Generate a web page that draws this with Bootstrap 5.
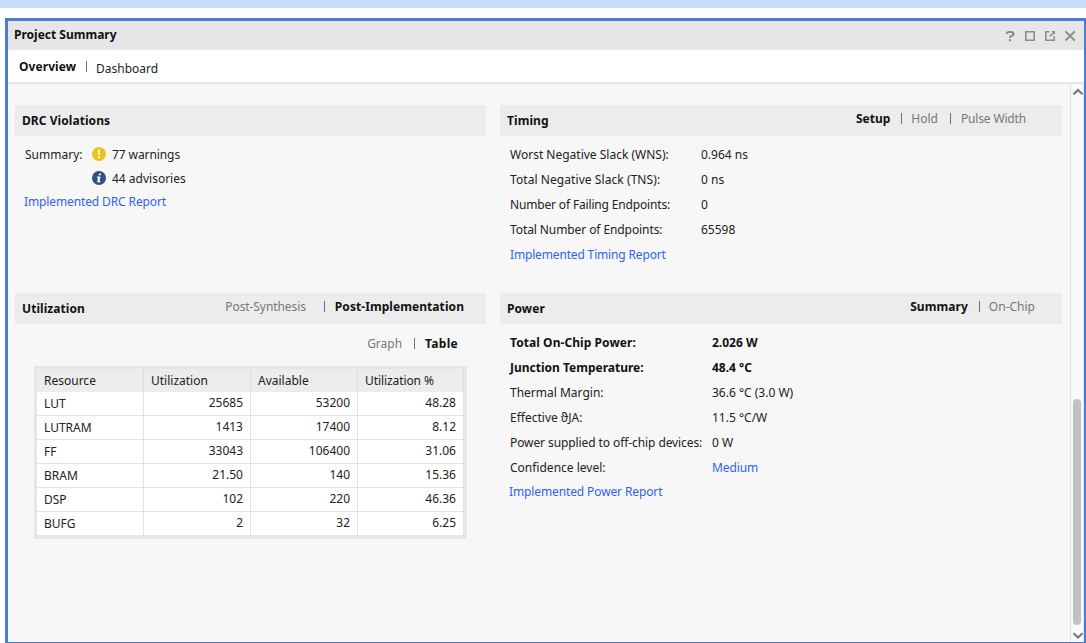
<!DOCTYPE html>
<html lang="en">
<head>
<meta charset="utf-8">
<title>Project Summary</title>
<link href="https://cdn.jsdelivr.net/npm/bootstrap@5.3.0/dist/css/bootstrap.min.css" rel="stylesheet">
<style>
html,body{height:100%}
body{font-family:"Noto Sans",sans-serif;font-size:12px;line-height:17px;color:#222;background:#fff;overflow:hidden}
b,.strong{font-weight:700;color:#111}
a{color:#2f62f0;text-decoration:none;letter-spacing:-.12px}
.topband{height:8px;background:#c9dcfd}
.win{margin:10px 0 0 5px;height:625px;border:3px solid #4a7ccf;border-right-width:2px;border-bottom-width:1px;background:#f7f7f7}
.titlebar{height:29px;background:#e6e6e6;padding:0 7px 0 6px}
.titlebar b{margin-bottom:2px}
.titlebar svg{margin-top:1px}
.views{height:34px;border-bottom:2px solid #e6e6e6;background:#fff;padding-left:11px}
.views b{width:67px;letter-spacing:.08px}
.views span{margin:4px 0 0 9px}
.bar{width:1px;height:11px;background:#6b7075;flex:none}
.content{padding:21px 8px 0 7px}
.leftcol{width:471px}
.rightcol{width:562px}
.toprow{height:188px}
.head{height:31px;background:#ececec;padding-left:7px}
.head>b{letter-spacing:.06px}
.choices{margin-bottom:4px;color:#777}
.facts{padding:6px 0 0 10px}
.facts>div{height:25px}
.facts .key{width:191px}
.power .key{width:202px}
.tight{letter-spacing:-.09px}
.tighter{letter-spacing:-.16px}
.wide{letter-spacing:.07px}
.ico{width:14px;height:14px;margin-right:6px}
.lines{height:24px}
.switch{height:42px;padding:0 28px 3px 0;color:#777}
.grid{width:433px;margin-left:19px;border:3px solid #e6e6e6;background:#fff;table-layout:fixed;border-collapse:separate;border-spacing:0}
.grid th,.grid td{padding:0 7px;border-right:1px solid #e2e2e2;font-weight:400;line-height:17px}
.grid th{height:23px;background:#ececec;border-right-color:#dcdcdc}
.grid td{height:24px;border-bottom:1px solid #e2e2e2;text-align:right;padding-bottom:2px}
.grid td:first-child{text-align:left;padding-bottom:0}
.grid tr:last-child td{border-bottom-color:#e6e6e6}
.scroller{width:14px;border-left:1px solid #e2e2e2;border-right:1px solid #e6e6e6;background:#fafafa;padding:3px 0 0}
.scroller svg{margin-left:1px}
.thumb{width:8px;height:226px;margin-top:303px;border-radius:4px;background:#c1c1c1}
</style>
</head>
<body>
<div class="topband"></div>
<main class="win d-flex flex-column">
  <header class="titlebar d-flex align-items-center justify-content-between">
    <b>Project Summary</b>
    <svg width="72" height="14" viewBox="0 0 72 14" fill="none" stroke="#8c8c8c" stroke-width="1.6">
      <path d="M1.8 5V4.6Q2 3 4 3H6.2Q8.4 3 8.4 4.8T6.4 7Q5 7.5 5 9M5 10.2v2.1" stroke-width="2.2"/>
      <path d="M20.8 2.8h8.4v8.4h-8.4z"/>
      <path d="M44.2 2.8h-3.4v8.4h8.4V7.3M45 7.2l3.5-3.5"/><path d="M46.3 2H50v3.7z" fill="#8c8c8c" stroke="none"/>
      <path d="M60.5 2.3l9.2 9.2M69.7 2.3l-9.2 9.2" stroke-width="1.9"/>
    </svg>
  </header>
  <nav class="views d-flex align-items-center"><b>Overview</b><i class="bar"></i><span>Dashboard</span></nav>
  <div class="d-flex flex-grow-1">
    <div class="content d-flex justify-content-between flex-grow-1">
      <div class="leftcol">
        <section class="toprow">
          <div class="head d-flex align-items-center"><b>DRC Violations</b></div>
          <div class="d-flex lines align-items-center" style="margin:6px 0 0 10px"><span style="width:67px">Summary:</span>
            <svg class="ico" viewBox="0 0 14 14"><circle cx="7" cy="7" r="7" fill="#eac51c"/><path d="M6 2.7h2L7.7 8H6.3zM6 9.2h2v2H6z" fill="#fff"/></svg><span class="tight">77 warnings</span></div>
          <div class="d-flex lines align-items-center" style="padding-left:77px">
            <svg class="ico" viewBox="0 0 14 14"><circle cx="7" cy="7" r="7" fill="#334f88"/><path d="M7.1 2.5h2l-.4 1.8h-2zM5.2 5.4h3.3l-1 4.5h1.1l-.3 1.4H5.1l.9-4.5H4.9z" fill="#fff"/></svg>44 advisories</div>
          <div class="d-flex align-items-center" style="height:22px;padding-left:9px"><a href="#">Implemented DRC Report</a></div>
        </section>
        <section>
          <div class="head d-flex align-items-center justify-content-between" style="padding-right:22px"><b>Utilization</b>
            <div class="choices d-flex align-items-center"><span class="tight">Post-Synthesis</span><i class="bar" style="margin:0 10px 0 18px"></i><b class="wide">Post-Implementation</b></div></div>
          <div class="switch d-flex align-items-center justify-content-end"><span>Graph</span><i class="bar" style="margin:0 10px 0 12px"></i><b style="letter-spacing:.28px">Table</b></div>
          <table class="grid">
            <colgroup><col style="width:107px"><col style="width:107px"><col style="width:107px"><col style="width:106px"></colgroup>
            <thead><tr><th>Resource</th><th>Utilization</th><th>Available</th><th class="tight">Utilization %</th></tr></thead>
            <tbody>
              <tr><td>LUT</td><td>25685</td><td>53200</td><td>48.28</td></tr>
              <tr><td>LUTRAM</td><td>1413</td><td>17400</td><td>8.12</td></tr>
              <tr><td>FF</td><td>33043</td><td>106400</td><td>31.06</td></tr>
              <tr><td>BRAM</td><td>21.50</td><td>140</td><td>15.36</td></tr>
              <tr><td>DSP</td><td>102</td><td>220</td><td>46.36</td></tr>
              <tr><td>BUFG</td><td>2</td><td>32</td><td>6.25</td></tr>
            </tbody>
          </table>
        </section>
      </div>
      <div class="rightcol">
        <section class="toprow">
          <div class="head d-flex align-items-center justify-content-between" style="padding-right:36px"><b>Timing</b>
            <div class="choices d-flex align-items-center"><b>Setup</b><i class="bar" style="margin:0 9px 0 11px"></i><span>Hold</span><i class="bar" style="margin:0 10px 0 12px"></i><span class="tighter">Pulse Width</span></div></div>
          <div class="facts">
            <div class="d-flex align-items-center"><span class="key">Worst Negative Slack (WNS):</span>0.964 ns</div>
            <div class="d-flex align-items-center"><span class="key wide">Total Negative Slack (TNS):</span>0 ns</div>
            <div class="d-flex align-items-center"><span class="key tighter">Number of Failing Endpoints:</span>0</div>
            <div class="d-flex align-items-center"><span class="key tight">Total Number of Endpoints:</span>65598</div>
            <div class="d-flex align-items-center"><a class="tighter" href="#">Implemented Timing Report</a></div>
          </div>
        </section>
        <section>
          <div class="head d-flex align-items-center justify-content-between" style="padding-right:27px"><b>Power</b>
            <div class="choices d-flex align-items-center"><b class="wide">Summary</b><i class="bar" style="margin:0 9px 0 11px"></i><span>On-Chip</span></div></div>
          <div class="facts power">
            <div class="d-flex align-items-center strong"><span class="key wide">Total On-Chip Power:</span>2.026 W</div>
            <div class="d-flex align-items-center strong"><span class="key">Junction Temperature:</span>48.4 °C</div>
            <div class="d-flex align-items-center"><span class="key">Thermal Margin:</span>36.6 °C (3.0 W)</div>
            <div class="d-flex align-items-center"><span class="key">Effective ϑJA:</span>11.5 °C/W</div>
            <div class="d-flex align-items-center"><span class="key tight">Power supplied to off-chip devices:</span>0 W</div>
            <div class="d-flex align-items-center"><span class="key">Confidence level:</span><a href="#">Medium</a></div>
            <div class="d-flex align-items-center" style="height:23px;margin-left:-1px"><a href="#">Implemented Power Report</a></div>
          </div>
        </section>
      </div>
    </div>
    <div class="scroller d-flex flex-column align-items-center">
      <svg width="12" height="9" viewBox="0 0 12 9" fill="none" stroke="#777" stroke-width="2.2"><path d="M1.5 7.2L6 3l4.5 4.2"/></svg>
      <div class="thumb"></div>
      <svg style="margin-top:6px" width="12" height="9" viewBox="0 0 12 9" fill="none" stroke="#777" stroke-width="2.2"><path d="M1.5 2.3L6 6.5l4.5-4.2"/></svg>
    </div>
  </div>
</main>
<script src="https://cdn.jsdelivr.net/npm/bootstrap@5.3.0/dist/js/bootstrap.bundle.min.js"></script>
</body>
</html>
